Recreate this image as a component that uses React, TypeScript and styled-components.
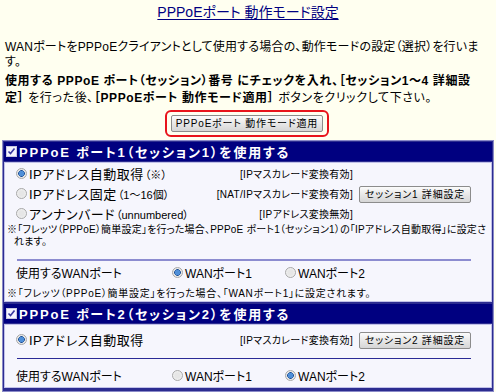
import styled, { createGlobalStyle } from "styled-components";

const GlobalStyle = createGlobalStyle`
  body {
    margin: 0;
    background: #fffff0;
    font-family: "Liberation Sans", "Noto Sans CJK JP", sans-serif;
    font-feature-settings: "palt";
    color: #000;
  }
`;

type TOption = {
  label: string;
  detail?: string;
  mode: string;
  checked?: boolean;
  button?: string;
};

type TSession = {
  no: number;
  options: TOption[];
  remark?: string[];
  wan: number;
  wanRemark?: string;
  lineTone: "light" | "dark";
  bodyTop: number;
  wanGap: number;
};

const sessions: TSession[] = [
  {
    no: 1,
    options: [
      { label: "IPアドレス自動取得", detail: "（※）", mode: "[IPマスカレード変換有効]", checked: true },
      { label: "IPアドレス固定", detail: "（1～16個）", mode: "[NAT/IPマスカレード変換有効]", button: "セッション1 詳細設定" },
      { label: "アンナンバード", detail: "（unnumbered）", mode: "[IPアドレス変換無効]" },
    ],
    remark: [
      "※「フレッツ（PPPoE）簡単設定」を行った場合、PPPoE ポート1（セッション1）の「IPアドレス自動取得」に設定さ",
      "れます。",
    ],
    wan: 1,
    wanRemark: "※「フレッツ（PPPoE）簡単設定」を行った場合、「WANポート1」に設定されます。",
    lineTone: "light",
    bodyTop: 0,
    wanGap: 0,
  },
  {
    no: 2,
    options: [
      { label: "IPアドレス自動取得", mode: "[IPマスカレード変換有効]", checked: true, button: "セッション2 詳細設定" },
    ],
    wan: 2,
    lineTone: "dark",
    bodyTop: 4,
    wanGap: 5,
  },
];

const Radio = ({ checked }: { checked?: boolean }) => (
  <RadioDot $checked={checked} />
);

const CheckMark = () => (
  <CheckBox>
    <svg width="11" height="11" viewBox="0 0 11 11">
      <rect x="0.5" y="0.5" width="10" height="10" fill="#f4f4ff" stroke="#c8c8e0" />
      <path d="M2.5 5.5 L4.5 7.5 L8.5 2.5" stroke="#3a3aa0" strokeWidth="1.6" fill="none" />
    </svg>
  </CheckBox>
);

export default function App() {
  return (
    <Page>
      <GlobalStyle />
      <Title>PPPoEポート 動作モード設定</Title>
      <Lead>
        <Line>WANポートをPPPoEクライアントとして使用する場合の、動作モードの設定（選択）を行いま</Line>
        <Line>す。</Line>
      </Lead>
      <Guide>
        <Line>
          <b>使用する PPPoE ポート（セッション）番号 にチェックを入れ、［セッション1～4 詳細設</b>
        </Line>
        <Line>
          <b>定］</b> を行った後、<b>［PPPoEポート 動作モード適用］</b> ボタンをクリックして下さい。
        </Line>
      </Guide>
      <ApplyArea>
        <Highlight>
          <GrayButton $width={152}>PPPoEポート 動作モード適用</GrayButton>
        </Highlight>
      </ApplyArea>
      <Frame>
        {sessions.map((s) => (
          <Section key={s.no}>
            <Header>
              <CheckMark />
              PPPoE ポート{s.no}（セッション{s.no}）を使用する
            </Header>
            <Body $top={s.bodyTop}>
              {s.options.map((o) => (
                <OptionRow key={o.label}>
                  <OptionLabel>
                    <Radio checked={o.checked} />
                    {o.label}
                    {o.detail && <Detail>{o.detail}</Detail>}
                  </OptionLabel>
                  <Mode>{o.mode}</Mode>
                  <div>{o.button && <GrayButton $width={112}>{o.button}</GrayButton>}</div>
                </OptionRow>
              ))}
              {s.remark && (
                <Remark>
                  <Line>{s.remark[0]}</Line>
                  <Indented>{s.remark[1]}</Indented>
                </Remark>
              )}
              <Divider $tone={s.lineTone} />
              <WanRow $gap={s.wanGap}>
                <span>使用するWANポート</span>
                <WanChoice>
                  <Radio checked={s.wan === 1} />
                  WANポート1
                </WanChoice>
                <WanChoice>
                  <Radio checked={s.wan === 2} />
                  WANポート2
                </WanChoice>
              </WanRow>
              {s.wanRemark && <WanRemark>{s.wanRemark}</WanRemark>}
            </Body>
          </Section>
        ))}
      </Frame>
    </Page>
  );
}

const Page = styled.div`
  width: 496px;
  height: 392px;
  overflow: hidden;
`;

const Title = styled.h1`
  margin: 0;
  padding-top: 3px;
  height: 21px;
  text-align: center;
  font-size: 14px;
  line-height: 18px;
  font-weight: normal;
  color: #000080;
  text-decoration: underline;
  text-underline-offset: 2px;
`;

const Line = styled.span`
  display: block;
  white-space: nowrap;
`;

const Indented = styled(Line)`
  padding-left: 7px;
`;

const Lead = styled.div`
  margin: 16px 0 0 5px;
  font-size: 12px;
  line-height: 15px;
  letter-spacing: 0.2px;
`;

const Guide = styled.div`
  margin: 3px 0 0 5px;
  font-size: 12px;
  line-height: 17px;
  letter-spacing: 0.6px;
  height: 34px;
  overflow: hidden;
`;

const ApplyArea = styled.div`
  display: flex;
  justify-content: center;
  margin-top: 3px;
  padding-right: 2px;
`;

const Highlight = styled.div`
  display: flex;
  border: 2px solid #e8141c;
  border-radius: 6px;
  padding: 3px 4px;
`;

const GrayButton = styled.button<{ $width: number }>`
  width: ${(p) => p.$width}px;
  height: 17px;
  padding: 0;
  border: 1px solid #8c8c8c;
  border-radius: 2px;
  background: linear-gradient(#fbfbfb, #e4e4e4 60%, #d6d6d6);
  font-family: "Liberation Sans", "Noto Sans CJK JP", sans-serif;
  font-feature-settings: "palt";
  font-size: 10px;
  line-height: 15px;
  letter-spacing: 0.8px;
  color: #000;
`;

const Frame = styled.div`
  margin: 3px 2px 0;
  border: 1px solid #8a8ac8;
  background: #2c2c90;
  padding: 1px;
`;

const Section = styled.div`
  display: flex;
  flex-direction: column;
`;

const Header = styled.div`
  display: flex;
  align-items: center;
  gap: 2px;
  height: 19px;
  padding-left: 2px;
  background: #000080;
  color: #fff;
  font-size: 13px;
  font-weight: bold;
  letter-spacing: 1.8px;
`;

const CheckBox = styled.span`
  display: inline-flex;
`;

const Body = styled.div<{ $top: number }>`
  margin: 1px 0 2px;
  border: 1px solid #c0c0e8;
  background: #f6f6fd;
  padding: ${(p) => p.$top}px 20px 1px 11px;
`;

const OptionRow = styled.div`
  display: grid;
  grid-template-columns: 1fr auto 112px;
  column-gap: 6px;
  align-items: center;
  height: 20px;
`;

const OptionLabel = styled.span`
  display: flex;
  align-items: baseline;
  font-size: 13px;
  letter-spacing: 0.5px;
  white-space: nowrap;
  & > span:first-child {
    align-self: center;
  }
`;

const Detail = styled.span`
  font-size: 11px;
  letter-spacing: 0;
  margin-left: 1px;
`;

const Mode = styled.span`
  font-size: 10px;
  letter-spacing: 0.3px;
  text-align: right;
  white-space: nowrap;
`;

const RadioDot = styled.span<{ $checked?: boolean }>`
  display: inline-block;
  box-sizing: border-box;
  width: 11px;
  height: 11px;
  margin-right: 2px;
  border-radius: 50%;
  border: 1px solid #a8a8a8;
  background: ${(p) =>
    p.$checked
      ? "radial-gradient(circle, #4f8fd8 0 2.5px, #1d4f96 3px, #e6e6e6 3.6px, #f6f6f6 100%)"
      : "radial-gradient(circle, #e6e6e6 0 40%, #fafafa 100%)"};
`;

const Remark = styled.div`
  margin: 1px 0 0 -9px;
  font-size: 10px;
  line-height: 12px;
  letter-spacing: 0.2px;
`;

const Divider = styled.hr<{ $tone: "light" | "dark" }>`
  margin: ${(p) => (p.$tone === "light" ? "11px 0 0 1px" : "9px 0 0 1px")};
  border: 0;
  height: ${(p) => (p.$tone === "light" ? "2px" : "1px")};
  background: ${(p) => (p.$tone === "light" ? "#8c8cd0" : "#2a2a96")};
`;

const WanRow = styled.div<{ $gap: number }>`
  display: grid;
  grid-template-columns: 156px 113px auto;
  align-items: center;
  height: 22px;
  margin-top: ${(p) => p.$gap}px;
  font-size: 12px;
`;

const WanChoice = styled.span`
  display: flex;
  align-items: center;
`;

const WanRemark = styled.div`
  margin: 5px 0 0 -9px;
  font-size: 10px;
  line-height: 12px;
  letter-spacing: 0.7px;
  white-space: nowrap;
`;
